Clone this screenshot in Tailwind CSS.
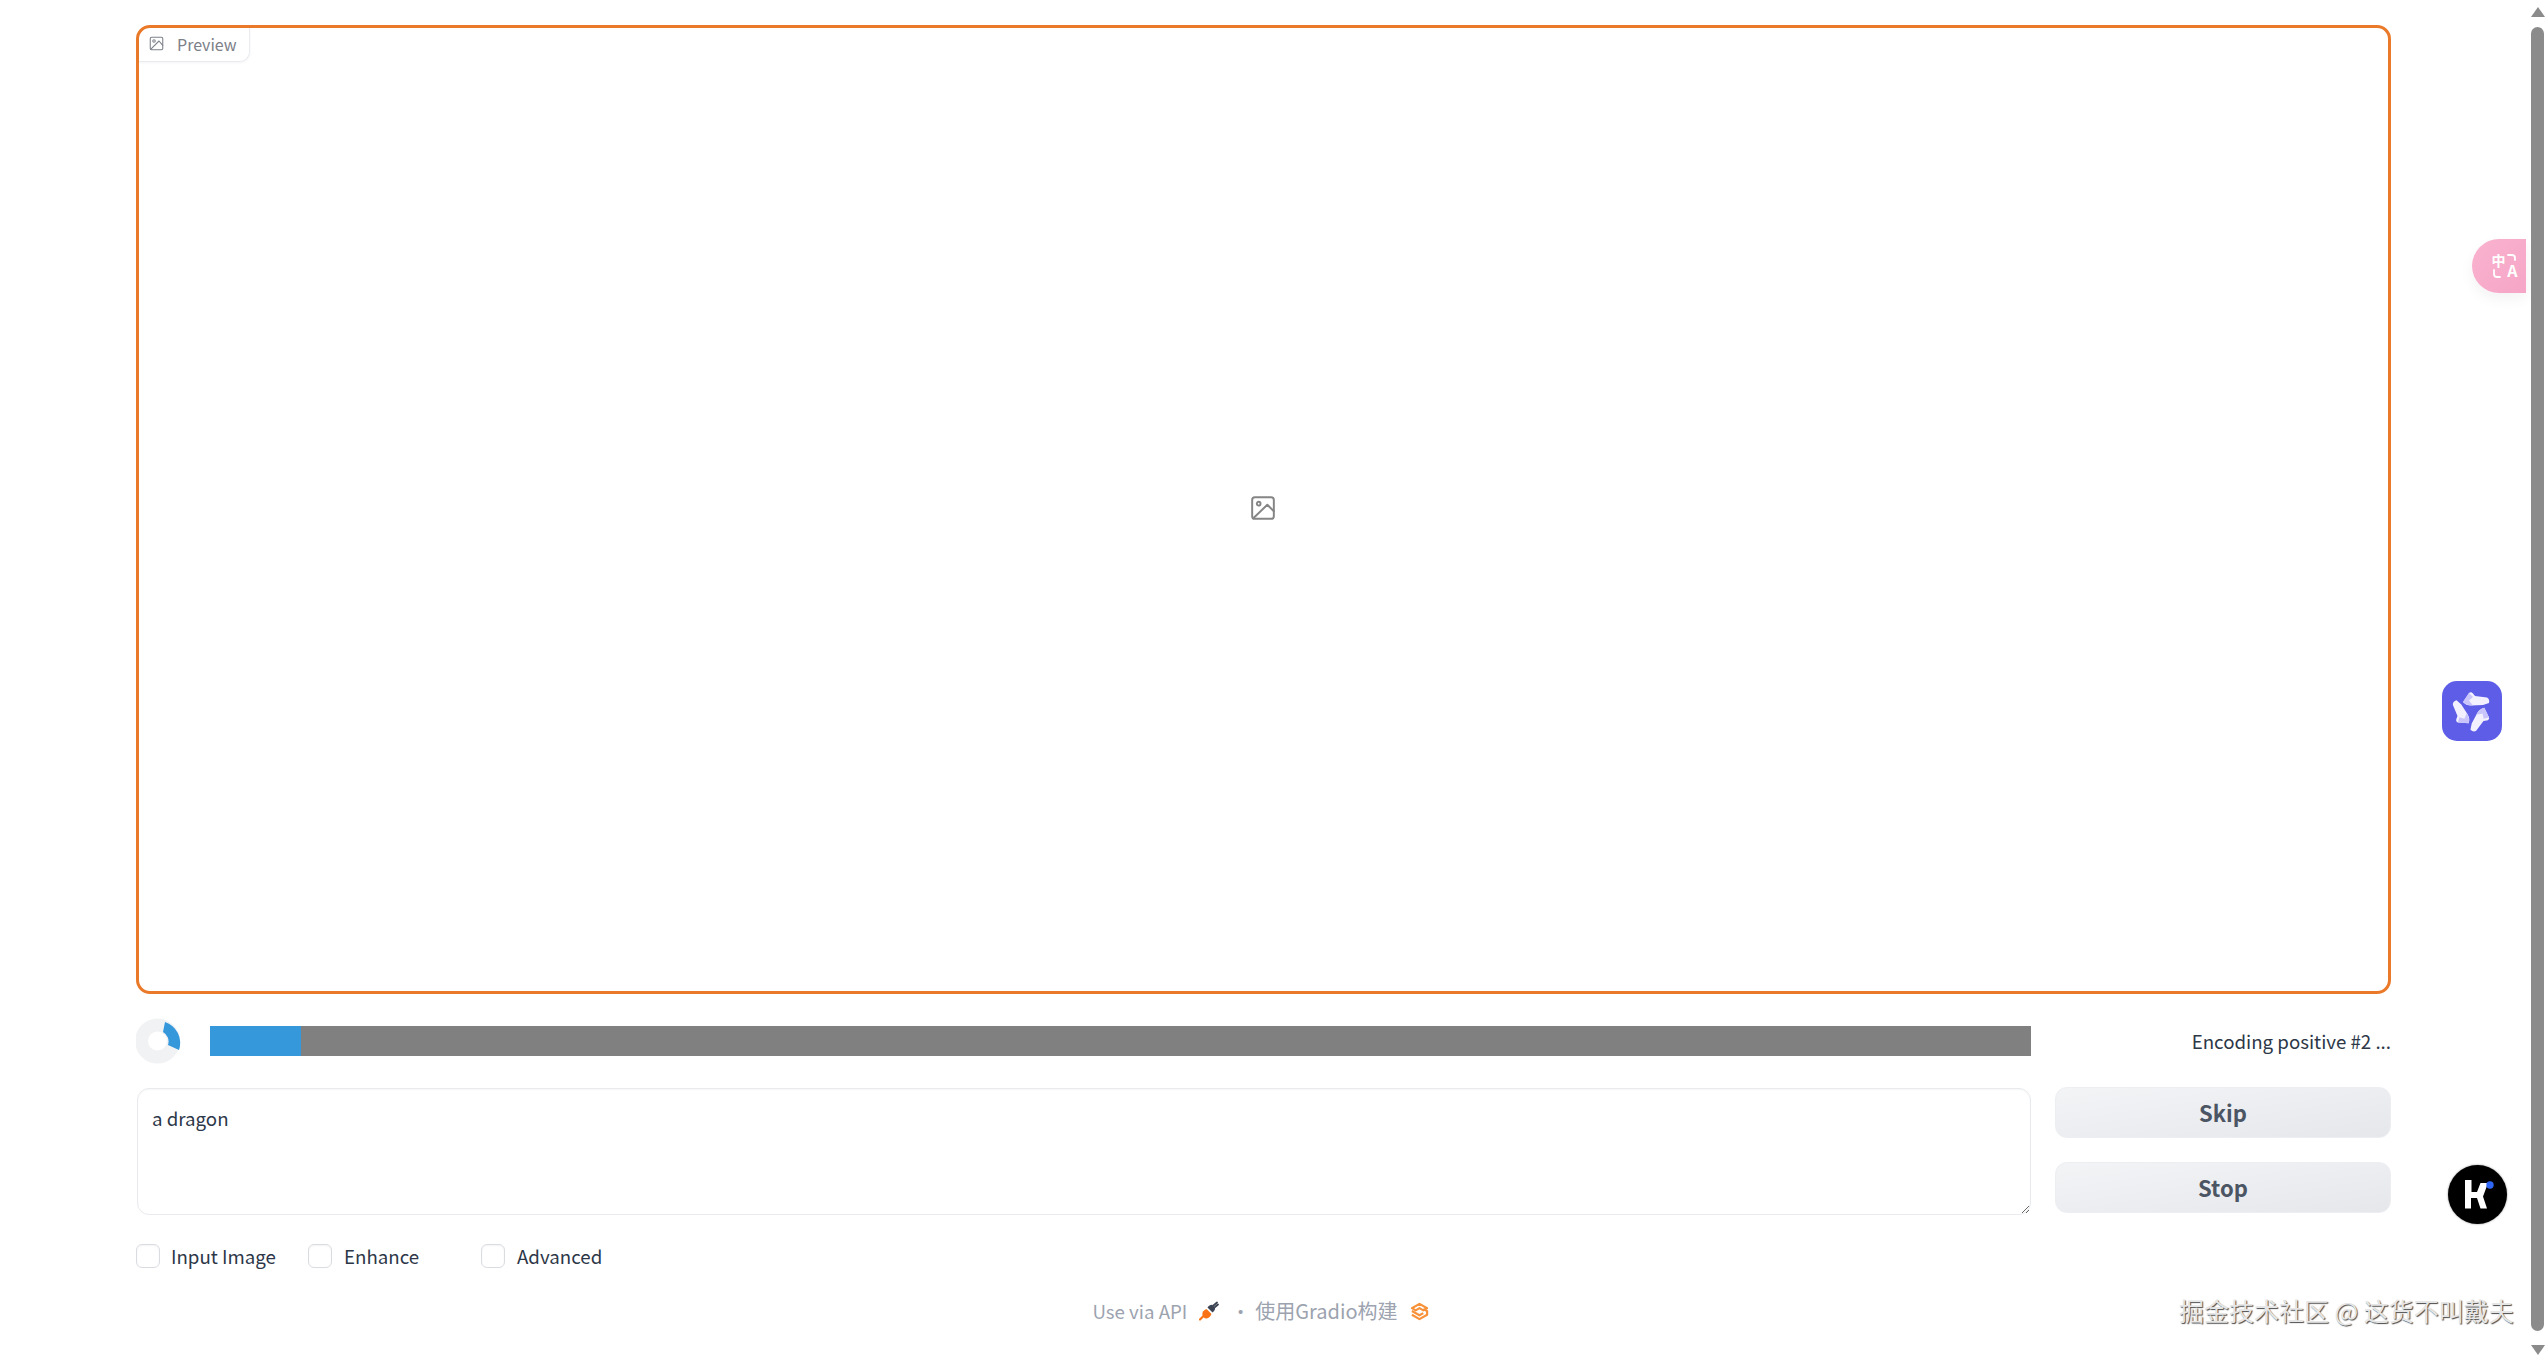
<!DOCTYPE html>
<html lang="zh">
<head>
<meta charset="utf-8">
<title>Fooocus</title>
<script src="https://cdn.jsdelivr.net/npm/@tailwindcss/browser@4"></script>
</head>
<body class="relative h-screen overflow-hidden bg-white font-['Noto_Sans_CJK_SC','Noto_Sans',sans-serif] text-[18.7px] text-[#27272a]">

<main class="flex h-full flex-col pl-[136px] pr-[157px] pt-[25px]">
  <!-- Preview -->
  <section class="relative flex h-[969px] items-center justify-center rounded-[14px] border-[3px] border-[#ea7a2a] bg-white">
    <div class="absolute left-0 top-0 flex h-[34px] w-[111px] items-center gap-[13px] rounded-br-[10px] rounded-tl-[10px] border-b border-r border-[#e9ebee] pb-[2px] pl-[10px] text-[16px] text-[#7c8088] shadow-[0_1px_3px_rgba(0,0,0,0.05)]">
      <svg class="h-[15px] w-[15px] shrink-0" viewBox="0 0 24 24" fill="none" stroke="currentColor" stroke-width="1.7" stroke-linecap="round" stroke-linejoin="round"><rect x="2" y="2" width="20" height="20" rx="2"/><circle cx="8" cy="8" r="2"/><path d="M22 15l-6-7L3 21"/></svg>
      <span>Preview</span>
    </div>
    <svg class="relative left-[-1px] top-[-2px] h-[26px] w-[26px] text-[#858585]" viewBox="0 0 24 24" fill="none" stroke="currentColor" stroke-width="1.8" stroke-linecap="round" stroke-linejoin="round"><rect x="2" y="2" width="20" height="20" rx="2.5"/><circle cx="8" cy="8" r="1.7"/><path d="M22 15l-6-6L3 21.5"/></svg>
  </section>

  <!-- Progress -->
  <div class="mt-[24px] flex h-[46px] items-center">
    <svg class="h-[46px] w-[46px] shrink-0" viewBox="0 0 46 46">
      <circle cx="21.500" cy="23" r="16" fill="none" stroke="#f1f2f3" stroke-width="13"/>
      <path d="M29 4 A22 22 0 0 1 43 32 L32 27 A11 11 0 0 0 27 14 Z" fill="#3498db"/>
    </svg>
    <div class="ml-[28px] flex h-[30px] w-[1821px] shrink-0 bg-[#808080]">
      <div class="h-full w-[91px] bg-[#3498db]"></div>
    </div>
    <div class="flex-1 whitespace-nowrap text-right text-[#2d3748]">Encoding positive #2 ...</div>
  </div>

  <!-- Prompt and buttons -->
  <div class="mt-[23px] flex gap-[24px]">
    <textarea readonly class="ml-[1px] mt-[1px] h-[127px] w-[1894px] shrink-0 rounded-[12px] border border-[#e8eaed] bg-white px-[14px] py-[14px] text-[18.7px] leading-[30px] text-[#2d3748] shadow-[inset_0_1px_2px_rgba(0,0,0,0.04)] outline-none">a dragon</textarea>
    <div class="flex flex-1 flex-col gap-[24px]">
      <button class="h-[51px] rounded-[12px] border border-[#eceef1] bg-gradient-to-br from-[#f3f4f6] to-[#e5e7eb] text-[22px] font-semibold text-[#4b5563]">Skip</button>
      <button class="h-[51px] rounded-[12px] border border-[#eceef1] bg-gradient-to-br from-[#f3f4f6] to-[#e5e7eb] text-[22px] font-semibold text-[#4b5563]">Stop</button>
    </div>
  </div>

  <!-- Checkboxes -->
  <div class="mt-[26px] flex h-[30px] items-center text-[#2d3748]">
    <label class="flex w-[172px] items-center gap-[11px]"><input type="checkbox" class="h-[24px] w-[24px] shrink-0 appearance-none rounded-[6px] border border-[#d9dce1] bg-white shadow-[inset_0_1px_2px_rgba(0,0,0,0.05)]"><span>Input Image</span></label>
    <label class="flex w-[173px] items-center gap-[12px]"><input type="checkbox" class="h-[24px] w-[24px] shrink-0 appearance-none rounded-[6px] border border-[#d9dce1] bg-white shadow-[inset_0_1px_2px_rgba(0,0,0,0.05)]"><span>Enhance</span></label>
    <label class="flex items-center gap-[12px]"><input type="checkbox" class="h-[24px] w-[24px] shrink-0 appearance-none rounded-[6px] border border-[#d9dce1] bg-white shadow-[inset_0_1px_2px_rgba(0,0,0,0.05)]"><span>Advanced</span></label>
  </div>

  <!-- Footer -->
  <footer class="mt-[25px] flex h-[30px] items-center justify-center pr-[6px] text-[#9ca3af]">
    <span>Use via API</span>
    <svg class="ml-[12px] h-[20px] w-[20px]" viewBox="0 0 20 20">
      <path d="M1 18.500l3.500-3.500" stroke="#f97316" stroke-width="2.200" stroke-linecap="round"/>
      <path d="M4 10.500c1.500-1.800 2.800-2.300 3.800-2.300l4.500 4.500c0 1.200-.7 2.500-2.300 3.800-2 1.500-4 1.200-5.200 0s-2.200-3.800-.8-6z" fill="#f97316"/>
      <path d="M8.500 6.500c1.500-2 3.500-3 5-2.500l2.500 2.500c.5 1.500-.5 3.500-2.500 5z" fill="#3b4252"/>
      <path d="M14.500 4.500L18 1.500M16 6l3-2.500" stroke="#3b4252" stroke-width="1.800" stroke-linecap="round"/>
    </svg>
    <span class="ml-[12px] w-[16px] text-center">·</span>
    <span class="ml-[8px] text-[20px]">使用Gradio构建</span>
    <svg class="ml-[12px] h-[19px] w-[19px]" viewBox="0 0 20 20" fill="none" stroke="#f7923a" stroke-width="2.300" stroke-linejoin="round">
      <path d="M10 2l8 4.500-4 2.300-4-2.300-4 2.300-4-2.300z"/>
      <path d="M2 9.500l8 4.500 4-2.300"/>
      <path d="M2 13.500l8 4.500 8-4.500v-4l-4-2"/>
    </svg>
  </footer>
</main>

<!-- Floating browser extension widgets -->
<div class="absolute left-[2472px] top-[239px] flex h-[54px] w-[54px] items-center justify-center rounded-l-full bg-gradient-to-br from-[#f9b3cf] to-[#f6a5c6] pl-[11px] shadow-[0_6px_14px_rgba(0,0,0,0.05)]">
  <div class="relative h-[24px] w-[26px] font-bold leading-none text-white">
    <span class="absolute left-0 top-[-1px] text-[14px]">中</span>
    <span class="absolute bottom-[0px] right-[0px] text-[16px]">A</span>
    <svg class="absolute inset-0 h-[24px] w-[26px]" viewBox="0 0 26 24" fill="none" stroke="#fff" stroke-width="1.800" stroke-linecap="round"><path d="M16 1h4a3 3 0 0 1 3 3v2"/><path d="M2 16v4a3 3 0 0 0 3 3h3"/></svg>
  </div>
</div>

<div class="absolute left-[2442px] top-[681px] h-[60px] w-[60px] rounded-[15px] bg-[#5d5de8]">
  <svg class="h-[60px] w-[60px]" viewBox="0 0 60 60">
    <g>
      <path d="M21 21L27 12Q29 10.500 31 12.500L33 15L45 16.500Q48 18 47 22L41 24L29 24.500Q24 24.500 21 21Z" fill="#f3f1ff"/>
      <path d="M21 21L27 12L31 16L27 19.500L31 24.500Q24 24.500 21 21Z" fill="#c9c5fb"/>
    </g>
    <g transform="rotate(120 30 30)">
      <path d="M21 21L27 12Q29 10.500 31 12.500L33 15L45 16.500Q48 18 47 22L41 24L29 24.500Q24 24.500 21 21Z" fill="#f3f1ff"/>
      <path d="M21 21L27 12L31 16L27 19.500L31 24.500Q24 24.500 21 21Z" fill="#c9c5fb"/>
    </g>
    <g transform="rotate(240 30 30)">
      <path d="M21 21L27 12Q29 10.500 31 12.500L33 15L45 16.500Q48 18 47 22L41 24L29 24.500Q24 24.500 21 21Z" fill="#f3f1ff"/>
      <path d="M21 21L27 12L31 16L27 19.500L31 24.500Q24 24.500 21 21Z" fill="#c9c5fb"/>
    </g>
  </svg>
</div>

<div class="absolute left-[2448px] top-[1165px] flex h-[59px] w-[59px] items-center justify-center rounded-full bg-black shadow-[0_0_2px_rgba(0,0,0,0.5)]">
  <svg class="h-[59px] w-[59px]" viewBox="0 0 59 59">
    <path d="M17 15h6.500v12h5.500l3.500-9h7.500l-3.500 9.500-1.500 4 4 12h-6.500l-3.500-10.500h-6v10.500h-6z" fill="#fff"/>
    <circle cx="42" cy="20" r="3.700" fill="#2f66f6"/>
  </svg>
</div>

<!-- Watermark -->
<div class="absolute left-[2179px] top-[1292px] whitespace-nowrap text-[25px] leading-[36px] text-[#e6e6e6] [text-shadow:1px_1px_1px_#4a4a4a]">掘金技术社区 @ 这货不叫戴夫</div>

<!-- Scrollbar -->
<div class="absolute right-0 top-0 h-full w-[17px] bg-white">
  <div class="absolute left-[0px] top-[7px] h-0 w-0 border-x-[7px] border-b-[10px] border-x-transparent border-b-[#8b8b8b]"></div>
  <div class="absolute left-0 top-[27px] h-[1304px] w-[13px] rounded-[7px] bg-[#8b8b8b]"></div>
  <div class="absolute left-0 top-[1345px] h-0 w-0 border-x-[7px] border-t-[10px] border-x-transparent border-t-[#8b8b8b]"></div>
</div>

</body>
</html>
